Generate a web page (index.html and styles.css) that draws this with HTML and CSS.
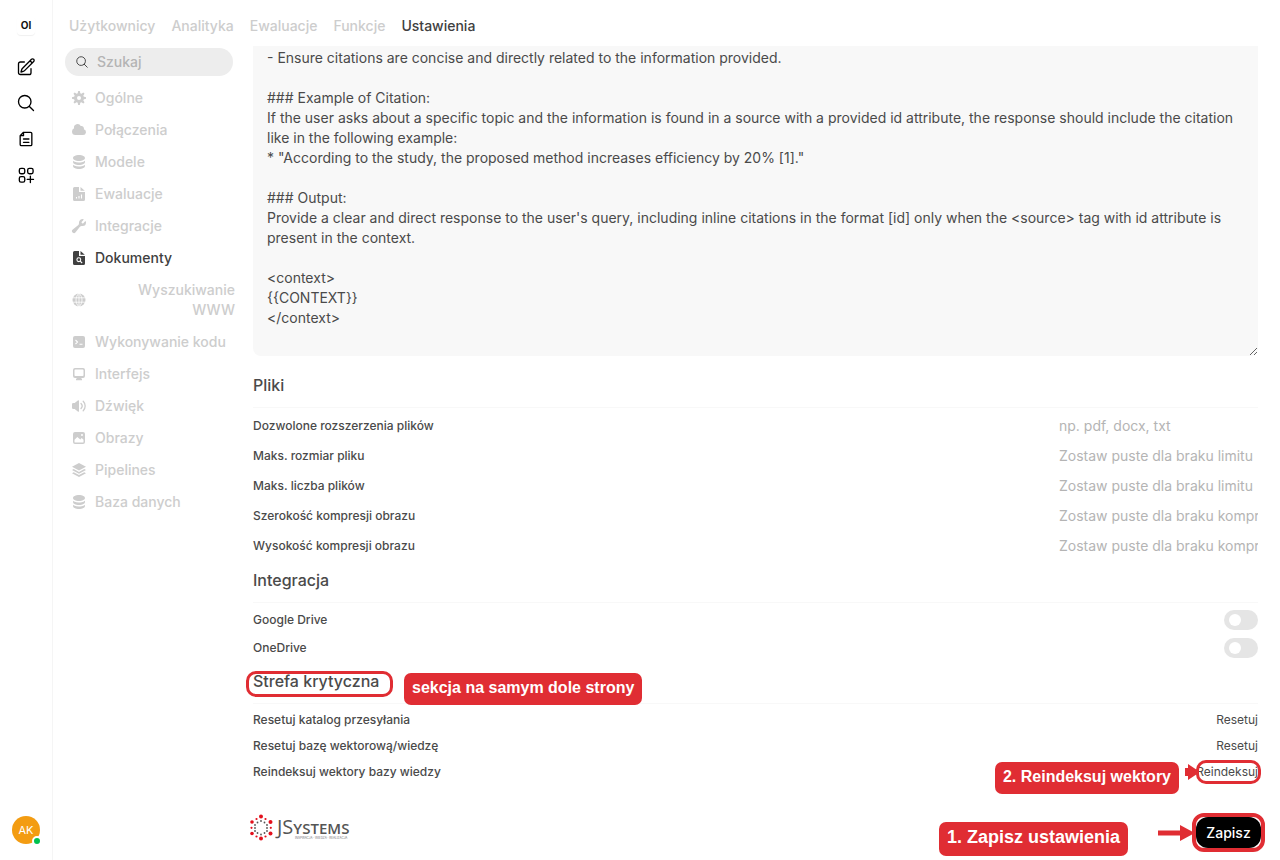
FILE: index.html
```html
<!DOCTYPE html>
<html lang="pl">
<head>
<meta charset="utf-8">
<meta name="viewport" content="width=device-width, initial-scale=1">
<title>Ustawienia – Dokumenty</title>
<link rel="stylesheet" href="styles.css">
</head>
<body>
<aside class="rail">
  <a class="brand" href="#">OI</a>
  <button class="rail-button" type="button" aria-label="Nowy czat"><svg class="line-icon" viewBox="0 0 24 24"><path d="m16.862 4.487 1.687-1.688a1.875 1.875 0 1 1 2.652 2.652L10.582 16.07a4.5 4.5 0 0 1-1.897 1.13L6 18l.8-2.685a4.5 4.5 0 0 1 1.13-1.897l8.932-8.931Zm0 0L19.5 7.125M18 14v4.75A2.25 2.25 0 0 1 15.75 21H5.25A2.25 2.25 0 0 1 3 18.75V8.25A2.25 2.25 0 0 1 5.25 6H10"/></svg></button>
  <button class="rail-button" type="button" aria-label="Szukaj"><svg class="line-icon" viewBox="0 0 24 24"><path d="m21 21-5.197-5.197m0 0A7.5 7.5 0 1 0 5.196 5.196a7.5 7.5 0 0 0 10.607 10.607Z"/></svg></button>
  <button class="rail-button" type="button" aria-label="Notatki"><svg class="line-icon" viewBox="0 0 24 24"><path d="M9 4h8.500A1.500 1.500 0 0 1 19 5.500v13a1.500 1.500 0 0 1-1.500 1.500h-11A1.500 1.500 0 0 1 5 18.500V8zM9 4v4H5M9 12h6.500M9 16h6.500"/></svg></button>
  <button class="rail-button" type="button" aria-label="Obszar roboczy"><svg class="line-icon" viewBox="0 0 24 24"><rect x="4" y="4" width="6.500" height="6.500" rx="2"/><rect x="14" y="4" width="6.500" height="6.500" rx="2"/><rect x="4" y="14" width="6.500" height="6.500" rx="2"/><path d="M17.250 13.500v7.500M13.500 17.250H21"/></svg></button>
  <button class="avatar" type="button">AK<span class="status"></span></button>
</aside>

<div class="page">
  <nav class="topnav">
    <a href="#">Użytkownicy</a>
    <a href="#">Analityka</a>
    <a href="#">Ewaluacje</a>
    <a href="#">Funkcje</a>
    <a href="#" class="current">Ustawienia</a>
  </nav>

  <div class="columns">
    <div class="sidebar">
      <label class="search">
        <svg class="search-icon" viewBox="0 0 24 24"><path d="m21 21-5.197-5.197m0 0A7.5 7.5 0 1 0 5.196 5.196a7.5 7.5 0 0 0 10.607 10.607Z"/></svg>
        <input type="text" placeholder="Szukaj" aria-label="Szukaj">
      </label>
      <nav class="tabs">
        <a href="#"><svg viewBox="0 0 16 16"><path fill-rule="evenodd" d="M6.955 1.450A.5.5 0 0 1 7.452 1h1.096a.5.5 0 0 1 .497.450l.17 1.699c.484.12.94.312 1.356.562l1.321-1.081a.5.5 0 0 1 .67.033l.774.775a.5.5 0 0 1 .034.67l-1.080 1.320c.25.417.44.873.561 1.357l1.699.17a.5.5 0 0 1 .45.497v1.096a.5.5 0 0 1-.45.497l-1.699.17c-.12.484-.312.94-.562 1.356l1.082 1.322a.5.5 0 0 1-.034.67l-.774.774a.5.5 0 0 1-.67.033l-1.322-1.080c-.416.25-.872.44-1.356.561l-.17 1.699a.5.5 0 0 1-.497.45H7.452a.5.5 0 0 1-.497-.45l-.17-1.699a4.973 4.973 0 0 1-1.356-.562L4.108 13.370a.5.5 0 0 1-.67-.033l-.774-.775a.5.5 0 0 1-.034-.67l1.080-1.320a4.971 4.971 0 0 1-.561-1.357l-1.699-.17A.5.5 0 0 1 1 8.548V7.452a.5.5 0 0 1 .45-.497l1.699-.17c.12-.484.312-.94.562-1.356L2.629 4.107a.5.5 0 0 1 .034-.67l.774-.774a.5.5 0 0 1 .67-.033L5.430 3.710a4.970 4.970 0 0 1 1.356-.561zM6 8a2 2 0 1 0 4 0a2 2 0 0 0-4 0Z"/></svg><span>Ogólne</span></a>
        <a href="#"><svg viewBox="0 0 16 16"><path d="M1 9.500A3.500 3.500 0 0 0 4.500 13H12a3 3 0 0 0 .917-5.857 2.503 2.503 0 0 0-3.198-3.019 3.500 3.500 0 0 0-6.628 2.171A3.500 3.500 0 0 0 1 9.500Z"/></svg><span>Połączenia</span></a>
        <a href="#"><svg viewBox="0 0 16 16"><path d="M8 7c3.314 0 6-1.343 6-3s-2.686-3-6-3-6 1.343-6 3 2.686 3 6 3ZM8 8.500c1.840 0 3.579-.37 4.914-1.037A6.330 6.330 0 0 0 14 6.780V8c0 1.657-2.686 3-6 3S2 9.657 2 8V6.780c.346.273.72.5 1.087.683C4.420 8.131 6.160 8.500 8 8.500ZM8 12.500c1.840 0 3.579-.37 4.914-1.037.366-.183.74-.41 1.086-.684V12c0 1.657-2.686 3-6 3s-6-1.343-6-3v-1.220c.346.273.72.5 1.087.683C4.420 12.131 6.160 12.500 8 12.500Z"/></svg><span>Modele</span></a>
        <a href="#"><svg viewBox="0 0 16 16"><path d="M3.500 1H8v5h6v7.500a1.500 1.500 0 0 1-1.500 1.500h-9A1.500 1.500 0 0 1 2 13.500v-11A1.500 1.500 0 0 1 3.500 1ZM9.500 1l4.300 3.800H9.500z"/><path class="cut" d="M5.500 12.500v-1.500M8 12.500v-2.500M10.500 12.500v-4"/></svg><span>Ewaluacje</span></a>
        <a href="#"><svg viewBox="0 0 16 16"><path d="M15 4.500A3.500 3.500 0 0 1 11.435 8c-.99-.019-2.093.132-2.700.913l-4.130 5.310a2.015 2.015 0 1 1-2.827-2.828l5.309-4.130c.78-.607.932-1.710.914-2.700L8 4.500a3.500 3.500 0 0 1 4.477-3.362c.325.094.39.497.15.736L10.600 3.902a.48.48 0 0 0-.033.653c.271.314.565.608.879.879a.48.48 0 0 0 .653-.033l2.027-2.027c.239-.24.642-.175.736.15.09.31.138.637.138.976Z"/></svg><span>Integracje</span></a>
        <a href="#" class="current"><svg viewBox="0 0 16 16"><path d="M3.500 1H8v5h6v7.500a1.500 1.500 0 0 1-1.500 1.500h-9A1.500 1.500 0 0 1 2 13.500v-11A1.500 1.500 0 0 1 3.500 1ZM9.500 1l4.300 3.800H9.500z"/><circle class="cut" cx="7.800" cy="9.700" r="1.900"/><path class="cut" d="m9.200 11.100 1.900 1.900"/></svg><span>Dokumenty</span></a>
        <a href="#"><svg viewBox="0 0 16 16"><circle cx="8" cy="8" r="6.500"/><path class="cut thin" d="M1 5.800h14M1 10.200h14M8 1v14M8 1C4 5 4 11 8 15M8 1c4 4 4 10 0 14"/></svg><span>Wyszukiwanie WWW</span></a>
        <a href="#"><svg viewBox="0 0 16 16"><rect x="2" y="2" width="12" height="12" rx="2"/><path class="cut" d="m4.500 6 2 2-2 2M8.500 10.200h3"/></svg><span>Wykonywanie kodu</span></a>
        <a href="#"><svg viewBox="0 0 16 16"><path fill-rule="evenodd" d="M4 2h8a2 2 0 0 1 2 2v6a2 2 0 0 1-2 2h-1.500v1h.5v1.200H5V13h.5v-1H4a2 2 0 0 1-2-2V4a2 2 0 0 1 2-2Zm.3 1.400a.8.8 0 0 0-.8.8v5a.8.8 0 0 0 .8.8h7.400a.8.8 0 0 0 .8-.8v-5a.8.8 0 0 0-.8-.8Z"/></svg><span>Interfejs</span></a>
        <a href="#"><svg viewBox="0 0 16 16"><path d="M7.600 2.300A.75.75 0 0 1 8 3v10a.75.75 0 0 1-1.200.6L3.700 11H2.200A1.200 1.200 0 0 1 1 9.800V6.200A1.200 1.200 0 0 1 2.200 5h1.500l3.100-2.600z"/><path class="stroke" d="M10 5.500a3.600 3.600 0 0 1 0 5M12.200 3.300a6.600 6.600 0 0 1 0 9.400"/></svg><span>Dźwięk</span></a>
        <a href="#"><svg viewBox="0 0 16 16"><path fill-rule="evenodd" d="M4 2h8a2 2 0 0 1 2 2v8a2 2 0 0 1-2 2H4a2 2 0 0 1-2-2V4a2 2 0 0 1 2-2Zm-.5 7.800V12a.5.5 0 0 0 .5.500h8a.5.5 0 0 0 .5-.500V9.800l-1.800-1.700-1.400 1.300L6.300 7ZM11 4a1 1 0 1 0 0 2a1 1 0 0 0 0-2Z"/></svg><span>Obrazy</span></a>
        <a href="#"><svg viewBox="0 0 16 16"><path d="M8 1 15 4.800 8 8.600 1 4.800ZM2.700 7 8 9.900 13.300 7 15 8 8 11.800 1 8ZM2.700 10.200 8 13.100l5.300-2.900 1.700 1L8 15l-7-3.800Z"/></svg><span>Pipelines</span></a>
        <a href="#"><svg viewBox="0 0 16 16"><path d="M8 7c3.314 0 6-1.343 6-3s-2.686-3-6-3-6 1.343-6 3 2.686 3 6 3ZM8 8.500c1.840 0 3.579-.37 4.914-1.037A6.330 6.330 0 0 0 14 6.780V8c0 1.657-2.686 3-6 3S2 9.657 2 8V6.780c.346.273.72.5 1.087.683C4.420 8.131 6.160 8.500 8 8.500ZM8 12.500c1.840 0 3.579-.37 4.914-1.037.366-.183.74-.41 1.086-.684V12c0 1.657-2.686 3-6 3s-6-1.343-6-3v-1.220c.346.273.72.5 1.087.683C4.420 12.131 6.160 12.500 8 12.500Z"/></svg><span>Baza danych</span></a>
      </nav>
    </div>

    <main class="content">
      <textarea class="template" rows="15" aria-label="Szablon RAG">- Ensure citations are concise and directly related to the information provided.

### Example of Citation:
If the user asks about a specific topic and the information is found in a source with a provided id attribute, the response should include the citation like in the following example:
* "According to the study, the proposed method increases efficiency by 20% [1]."

### Output:
Provide a clear and direct response to the user's query, including inline citations in the format [id] only when the &lt;source&gt; tag with id attribute is present in the context.

&lt;context&gt;
{{CONTEXT}}
&lt;/context&gt;</textarea>

      <section class="group files">
        <h2>Pliki</h2>
        <div class="row"><label for="ext">Dozwolone rozszerzenia plików</label><input id="ext" type="text" placeholder="np. pdf, docx, txt"></div>
        <div class="row"><label for="size">Maks. rozmiar pliku</label><input id="size" type="text" placeholder="Zostaw puste dla braku limitu"></div>
        <div class="row"><label for="count">Maks. liczba plików</label><input id="count" type="text" placeholder="Zostaw puste dla braku limitu"></div>
        <div class="row"><label for="width">Szerokość kompresji obrazu</label><input id="width" type="text" placeholder="Zostaw puste dla braku kompresji"></div>
        <div class="row"><label for="height">Wysokość kompresji obrazu</label><input id="height" type="text" placeholder="Zostaw puste dla braku kompresji"></div>
      </section>

      <section class="group integrations">
        <h2>Integracja</h2>
        <div class="row"><label for="gdrive">Google Drive</label><input id="gdrive" class="switch" type="checkbox"></div>
        <div class="row"><label for="onedrive">OneDrive</label><input id="onedrive" class="switch" type="checkbox"></div>
      </section>

      <section class="group danger">
        <h2><span class="marked">Strefa krytyczna<span class="ring ring-title"></span><span class="callout callout-title">sekcja na samym dole strony</span></span></h2>
        <div class="row"><span>Resetuj katalog przesyłania</span><button type="button">Resetuj</button></div>
        <div class="row"><span>Resetuj bazę wektorową/wiedzę</span><button type="button">Resetuj</button></div>
        <div class="row"><span>Reindeksuj wektory bazy wiedzy</span><span class="marked"><button type="button">Reindeksuj</button><span class="ring ring-reindex"></span><svg class="arrow arrow-reindex" viewBox="0 0 12 16"><path d="M0 4h3V0l9 6v4l-9 6v-4H0z"/></svg><span class="callout callout-reindex">2. Reindeksuj wektory</span></span></div>
      </section>

      <footer class="footer">
        <svg class="logo" viewBox="0 0 100 28" role="img" aria-label="JSystems">
          <g fill="#e3101c"><circle cx="11" cy="2.500" r="2"/><circle cx="11" cy="24.500" r="2"/><circle cx="2" cy="8" r="1.800"/><circle cx="20.500" cy="8" r="2"/><circle cx="2" cy="19.500" r="1.800"/><circle cx="20.500" cy="19.500" r="2"/><circle cx="6.500" cy="5" r="1.100"/><circle cx="15.500" cy="5" r="1.100"/><circle cx="6.500" cy="22.500" r="1.100"/><circle cx="15.500" cy="22.500" r="1.100"/><circle cx="1.500" cy="13.800" r="1.100"/><circle cx="20.800" cy="13.800" r="1.100"/></g>
          <g fill="#555"><circle cx="11" cy="7" r=".9"/><circle cx="7.500" cy="8.500" r=".9"/><circle cx="14.500" cy="8.500" r=".9"/><circle cx="5" cy="11" r=".9"/><circle cx="17" cy="11" r=".9"/><circle cx="5" cy="14" r=".9"/><circle cx="17" cy="14" r=".9"/><circle cx="5" cy="17" r=".9"/><circle cx="17" cy="17" r=".9"/><circle cx="7.500" cy="19" r=".9"/><circle cx="14.500" cy="19" r=".9"/><circle cx="11" cy="20.500" r=".9"/></g>
          <text class="logo-name" x="27" y="20"><tspan class="logo-cap">JS</tspan>YSTEMS</text>
          <text class="logo-tag" x="45" y="25">INSPIRACJA · WIEDZA · REALIZACJA</text>
        </svg>
        <span class="marked save-frame"><button class="save" type="button">Zapisz</button><svg class="arrow arrow-save" viewBox="0 0 34 16"><path d="M0 5.500h22V0l12 6.500v3L22 16v-5.500H0z"/></svg><span class="callout callout-save">1. Zapisz ustawienia</span></span>
      </footer>
    </main>
  </div>
</div>
</body>
</html>
```
FILE: styles.css
```css
* { box-sizing: border-box; }

body {
  margin: 0;
  min-height: 100vh;
  display: flex;
  overflow: hidden;
  background: #fff;
  color: #4a4a4a;
  font-family: Inter, "Liberation Sans", sans-serif;
  font-size: 14px;
  line-height: 20px;
}

a { color: inherit; text-decoration: none; }
button, input, textarea { font: inherit; color: inherit; }
button { margin: 0; padding: 0; border: 0; background: none; cursor: pointer; }

/* Icon rail */
.rail {
  flex: none;
  width: 53px;
  display: flex;
  flex-direction: column;
  align-items: center;
  gap: 8px;
  padding: 16px 0;
  border-right: 1px solid #f5f5f5;
}
.brand {
  width: 18px;
  height: 19px;
  margin-bottom: 10px;
  border-radius: 4px;
  box-shadow: 0 1px 1px #f0f0f0;
  color: #111;
  font-size: 10px;
  font-weight: 700;
  line-height: 19px;
  text-align: center;
}
.rail-button { width: 28px; height: 28px; padding: 4px; color: #000; }
.line-icon { display: block; width: 20px; height: 20px; fill: none; stroke: currentColor; stroke-width: 1.6; stroke-linecap: round; stroke-linejoin: round; }
.avatar {
  position: relative;
  width: 28px;
  height: 28px;
  margin-top: auto;
  border-radius: 50%;
  background: #f39c12;
  color: #fff;
  font-size: 11px;
}
.status {
  position: absolute;
  right: -2px;
  bottom: -2px;
  width: 10px;
  height: 10px;
  border: 2px solid #fff;
  border-radius: 50%;
  background: #00c24f;
}

/* Page */
.page { flex: 1; min-width: 0; }
.topnav { display: flex; gap: 16px; padding: 16px 16px 10px; font-weight: 500; color: #cdcdcd; }
.topnav .current, .tabs .current { color: #404040; }
.columns { display: flex; }

.sidebar { flex: none; width: 182px; margin: 2px 18px 0 0; padding-left: 12px; }
.search { display: flex; align-items: center; gap: 8px; width: 168px; height: 28px; padding: 0 10px; border-radius: 14px; background: #ededed; }
.search-icon { flex: none; width: 14px; height: 14px; fill: none; stroke: #404040; stroke-width: 1.6; stroke-linecap: round; }
.search input { width: 100%; padding: 0; border: 0; outline: 0; background: none; font-weight: 500; }
::placeholder { color: #b4b4b4; opacity: 1; }

.tabs { display: flex; flex-direction: column; margin-top: 6px; padding-left: 6px; color: #cdcdcd; font-weight: 500; }
.tabs a { display: flex; align-items: center; gap: 8px; padding: 6px 0; text-align: right; }
.tabs a span { max-width: 140px; }
.tabs svg { flex: none; width: 16px; height: 16px; fill: currentColor; }
.tabs .cut { fill: none; stroke: #fff; stroke-width: 1.1; }
.tabs .thin { stroke-width: 0.8; }
.tabs .stroke { fill: none; stroke: currentColor; stroke-width: 1.3; stroke-linecap: round; }

/* Settings form */
.content { flex: 1; min-width: 0; padding: 0 22px 0 0; }
.template {
  display: block;
  width: 100%;
  margin: 0 0 10px;
  padding: 2px 14px 8px;
  border: 0;
  border-radius: 0 0 8px 8px;
  outline: 0;
  background: #f8f8f8;
  overflow: hidden;
  resize: vertical;
}
.group { padding-top: 7px; font-size: 12px; font-weight: 500; }
.group h2 {
  margin: 0 0 3px;
  padding-bottom: 10px;
  border-bottom: 1px solid #f8f8f8;
  font-size: 16px;
  font-weight: 500;
  line-height: 24px;
}
.row { display: flex; align-items: center; justify-content: space-between; }
.files .row { height: 30px; }
.files input { width: 199px; padding: 0; border: 0; outline: 0; background: none; font-size: 14px; font-weight: 400; }
.integrations .row { height: 28px; }
.danger .row { height: 26px; }
.danger button { font-size: 12px; font-weight: 400; }
.switch { appearance: none; width: 34px; height: 20px; margin: 0; padding: 4px 5px; border-radius: 10px; background: #e5e5e5; }
.switch::before { content: ""; display: block; width: 12px; height: 12px; border-radius: 50%; background: #fff; }

.footer { display: flex; align-items: center; justify-content: space-between; margin: 28px -7px 0 -3px; }
.logo { width: 100px; height: 28px; margin-bottom: 9px; }
.logo-name { fill: #555; font-family: "Open Sans", sans-serif; font-size: 15px; font-weight: 600; }
.logo-cap { font-size: 20px; font-weight: 400; }
.logo-tag { fill: #777; font-size: 3px; }
.save-frame { border: 4px solid #e02d33; border-radius: 12px; background: #fff; }
.save { display: block; width: 65px; height: 31px; border-radius: 12px; background: #000; color: #fff; font-weight: 500; }

/* Tutorial annotations laid over the form */
.marked { position: relative; }
.ring { position: absolute; border: 3px solid #e02d33; border-radius: 10px; pointer-events: none; }
.ring-title { inset: 0 -14px -6px -7px; }
.ring-reindex { inset: -2px -3px -2px 0; }
.callout {
  position: absolute;
  padding: 5px 8px 7px;
  border-radius: 7px;
  background: #e02d33;
  color: #fff;
  font-family: "Liberation Sans", Arial, sans-serif;
  font-size: 16px;
  font-weight: 700;
  line-height: 20px;
  white-space: nowrap;
}
.callout-title { top: 2px; left: 151px; }
.callout-reindex { top: 0; right: 79px; }
.callout-save { top: 5px; right: 133px; padding-bottom: 9px; font-size: 18px; }
.arrow { position: absolute; fill: #e02d33; }
.arrow-reindex { width: 12px; height: 16px; top: 2px; right: 61px; }
.arrow-save { width: 34px; height: 16px; top: 8px; right: 69px; }
```
